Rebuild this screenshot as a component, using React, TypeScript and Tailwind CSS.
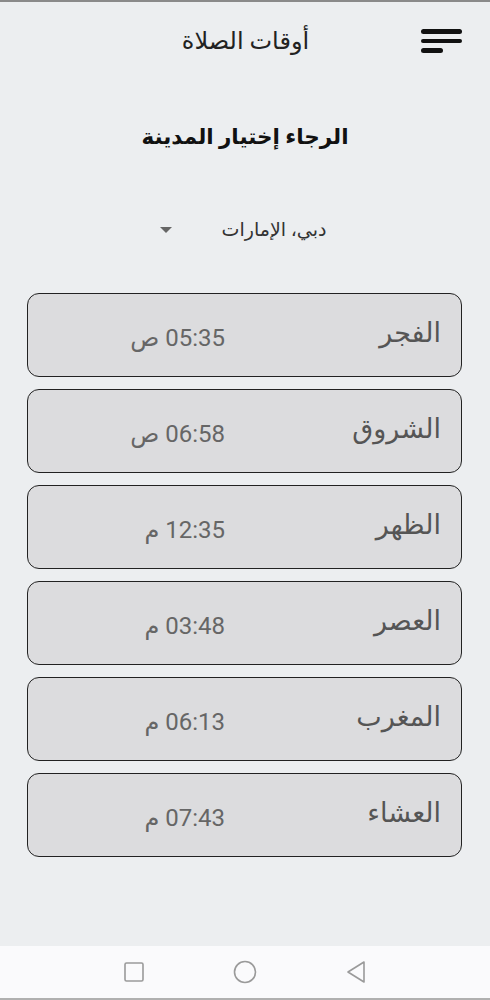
import React from "react";

const prayers = [
  { name: "الفجر", time: "05:35 ص" },
  { name: "الشروق", time: "06:58 ص" },
  { name: "الظهر", time: "12:35 م" },
  { name: "العصر", time: "03:48 م" },
  { name: "المغرب", time: "06:13 م" },
  { name: "العشاء", time: "07:43 م" },
];

const font = { fontFamily: "Roboto, 'Noto Sans', 'DejaVu Sans', sans-serif" };

export default function App() {
  return (
    <div
      dir="rtl"
      className="w-[490px] h-[1000px] flex flex-col bg-[#eceef0] border-t-2 border-[#8a8a8a] overflow-hidden"
      style={font}
    >
      {/* header */}
      <div className="h-[78px] flex items-center pr-[28px]">
        <div className="flex flex-col gap-[5px] w-[41px]">
          <span className="block h-[4.5px] w-[41px] rounded-full bg-[#111]" />
          <span className="block h-[4.5px] w-[41px] rounded-full bg-[#111]" />
          <span className="block h-[4.5px] w-[22px] rounded-full bg-[#111] self-end" />
        </div>
        <div className="flex-1 text-center text-[24px] leading-[30px] text-[#222] pl-[70px]">أوقات الصلاة</div>
      </div>

      <h1 className="mt-[42px] text-center text-[21.5px] leading-[30px] font-bold text-[#111]">الرجاء إختيار المدينة</h1>

      {/* city select */}
      <div className="mt-[63px] h-[30px] flex items-center justify-center gap-[50px] pr-[4px]">
        <span className="text-[19px] leading-[30px] text-[#333]">دبي، الإمارات</span>
        <span className="w-0 h-0 border-l-[6px] border-r-[6px] border-t-[6px] border-l-transparent border-r-transparent border-t-[#666]" />
      </div>

      {/* prayer cards */}
      <div className="mt-[48px] flex flex-col gap-[12px] mr-[28px] ml-[27px]">
        {prayers.map((p) => (
          <div
            key={p.name}
            className="h-[84px] flex items-center rounded-[12px] border-[1.5px] border-[#222] bg-[#dcdcde]"
          >
            <span className="w-[236px] pr-[20px] pb-[4px] text-[27px] text-[#555]">{p.name}</span>
            <span className="pt-[6px] text-[24px] text-[#666]">{p.time}</span>
          </div>
        ))}
      </div>

      <div className="flex-1" />

      {/* system nav bar */}
      <div dir="ltr" className="h-[54px] bg-[#fafafc] border-b-2 border-[#b0b0b0] flex items-center justify-center gap-[88px]">
        <svg width="22" height="22" viewBox="0 0 22 22">
          <rect x="2" y="2" width="18" height="18" rx="1.5" fill="none" stroke="#9a9a9a" strokeWidth="1.6" />
        </svg>
        <svg width="24" height="24" viewBox="0 0 24 24">
          <circle cx="12" cy="12" r="10.5" fill="none" stroke="#9a9a9a" strokeWidth="1.6" />
        </svg>
        <svg width="22" height="24" viewBox="0 0 22 24">
          <path d="M19 2 L3 12 L19 22 Z" fill="none" stroke="#9a9a9a" strokeWidth="1.6" strokeLinejoin="round" />
        </svg>
      </div>
    </div>
  );
}
